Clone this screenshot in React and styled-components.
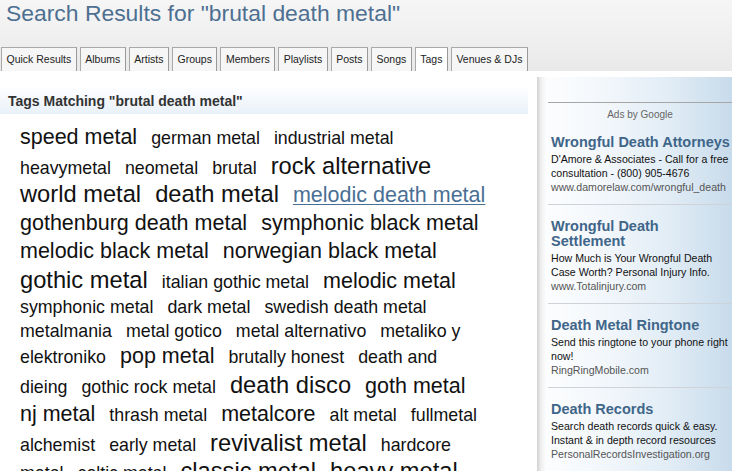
import React from "react";
import styled, { createGlobalStyle } from "styled-components";

const GlobalStyle = createGlobalStyle`
  html, body {
    margin: 0;
    padding: 0;
    background: #fff;
    font-family: "Liberation Sans", Arial, Helvetica, sans-serif;
  }
`;

const Page = styled.div`
  width: 732px;
  height: 471px;
  overflow: hidden;
  background: #fff;
`;

const Header = styled.div`
  background: linear-gradient(#f6f6f6, #e9e9e9);
  padding: 0;
`;

const Title = styled.h1`
  margin: 0 0 20px 6px;
  font-size: 22.9px;
  font-weight: normal;
  line-height: 27px;
  color: #4d6f91;
`;

const TabRow = styled.div`
  display: flex;
  align-items: flex-end;
  gap: 3px;
  padding-left: 1px;
`;

const Tab = styled.div`
  height: 23px;
  line-height: 23px;
  padding: 0 4.5px;
  font-size: 10.5px;
  color: #222;
  border: 1px solid #a9a9a9;
  border-bottom: none;
  border-right-color: #999;
  background: ${p => (p.$active ? "#fff" : "#f6f6f6")};
`;

const Body = styled.div`
  display: flex;
  align-items: flex-start;
  height: 400px;
`;

const Main = styled.div`
  width: 537px;
  flex: none;
  padding-top: 17px;
`;

const SectionBar = styled.div`
  margin-right: 9px;
  height: 26px;
  line-height: 26px;
  padding-left: 8px;
  font-size: 14px;
  font-weight: bold;
  color: #333;
  background: linear-gradient(#fdfeff, #e9f1f9);
`;

const Cloud = styled.div`
  padding: 10px 42px 0 20px;
  font-size: 18px;
  line-height: 24px;
  color: #111;
`;

const sizes = { s: 17.8, m: 21.5, l: 23.7 };
const leading = { s: "24px", m: "27.8px", l: "28.5px" };

const Tag = styled.span`
  font-size: ${p => sizes[p.$size]}px;
  line-height: ${p => leading[p.$size]};
  margin-right: 9px;
  color: ${p => (p.$link ? "#4a6f94" : "#111")};
  text-decoration: ${p => (p.$link ? "underline" : "none")};
  text-underline-offset: 2px;
  text-decoration-thickness: 1px;
`;

const Sidebar = styled.div`
  flex: 1;
  align-self: stretch;
  margin-top: 6px;
  background: linear-gradient(
    to right,
    #d2d2d2 0px,
    #efefef 4px,
    #fcfdfe 9px,
    #f4f8fc 60px,
    #e2edf6 130px,
    #c8dbeb 100%
  );
  overflow: hidden;
`;

const SideInner = styled.div`
  margin-left: 11px;
  padding-top: 25px;
`;

const AdsLabel = styled.div`
  border-top: 1px solid #a6a6a6;
  padding-top: 6px;
  text-align: center;
  font-size: 10px;
  line-height: 12px;
  color: #666;
`;

const Ad = styled.div`
  padding: 14px 0 10px 3px;
  border-bottom: 1px solid #cdd3d8;
`;

const AdTitle = styled.div`
  font-size: 14.5px;
  font-weight: bold;
  line-height: 15px;
  color: #3f6689;
  margin-bottom: 2px;
`;

const AdText = styled.div`
  font-size: 10.6px;
  line-height: 14px;
  color: #111;
`;

const AdUrl = styled.div`
  font-size: 10.6px;
  line-height: 14px;
  color: #555;
  white-space: nowrap;
`;

const tabs = [
  "Quick Results",
  "Albums",
  "Artists",
  "Groups",
  "Members",
  "Playlists",
  "Posts",
  "Songs",
  "Tags",
  "Venues & DJs",
];

const tags = [
  ["speed metal", "m"],
  ["german metal", "s"],
  ["industrial metal", "s"],
  ["heavymetal", "s"],
  ["neometal", "s"],
  ["brutal", "s"],
  ["rock alternative", "l"],
  ["world metal", "l"],
  ["death metal", "l"],
  ["melodic death metal", "m", true],
  ["gothenburg death metal", "m"],
  ["symphonic black metal", "m"],
  ["melodic black metal", "m"],
  ["norwegian black metal", "m"],
  ["gothic metal", "l"],
  ["italian gothic metal", "s"],
  ["melodic metal", "m"],
  ["symphonic metal", "s"],
  ["dark metal", "s"],
  ["swedish death metal", "s"],
  ["metalmania", "s"],
  ["metal gotico", "s"],
  ["metal alternativo", "s"],
  ["metaliko y elektroniko", "s"],
  ["pop metal", "m"],
  ["brutally honest", "s"],
  ["death and dieing", "s"],
  ["gothic rock metal", "s"],
  ["death disco", "l"],
  ["goth metal", "m"],
  ["nj metal", "m"],
  ["thrash metal", "s"],
  ["metalcore", "m"],
  ["alt metal", "s"],
  ["fullmetal alchemist", "s"],
  ["early metal", "s"],
  ["revivalist metal", "l"],
  ["hardcore metal", "s"],
  ["celtic metal", "s"],
  ["classic metal", "l"],
  ["heavy metal", "l"],
];

const ads = [
  {
    title: "Wrongful Death Attorneys",
    text: "D'Amore & Associates - Call for a free consultation - (800) 905-4676",
    url: "www.damorelaw.com/wrongful_death",
  },
  {
    title: "Wrongful Death Settlement",
    text: "How Much is Your Wrongful Death Case Worth? Personal Injury Info.",
    url: "www.Totalinjury.com",
  },
  {
    title: "Death Metal Ringtone",
    text: "Send this ringtone to your phone right now!",
    url: "RingRingMobile.com",
  },
  {
    title: "Death Records",
    text: "Search death records quick & easy. Instant & in depth record resources",
    url: "PersonalRecordsInvestigation.org",
  },
];

const App = () => {
  return (
    <Page>
      <GlobalStyle />
      <Header>
        <Title>Search Results for "brutal death metal"</Title>
        <TabRow>
          {tabs.map(t => (
            <Tab key={t} $active={t === "Tags"}>
              {t}
            </Tab>
          ))}
        </TabRow>
      </Header>
      <Body>
        <Main>
          <SectionBar>Tags Matching "brutal death metal"</SectionBar>
          <Cloud>
            {tags.map(([name, size, link]) => (
              <React.Fragment key={name}>
                <Tag $size={size} $link={link}>
                  {name}
                </Tag>{" "}
              </React.Fragment>
            ))}
          </Cloud>
        </Main>
        <Sidebar>
          <SideInner>
            <AdsLabel>Ads by Google</AdsLabel>
            {ads.map(ad => (
              <Ad key={ad.title}>
                <AdTitle>{ad.title}</AdTitle>
                <AdText>{ad.text}</AdText>
                <AdUrl>{ad.url}</AdUrl>
              </Ad>
            ))}
          </SideInner>
        </Sidebar>
      </Body>
    </Page>
  );
};

export default App;
